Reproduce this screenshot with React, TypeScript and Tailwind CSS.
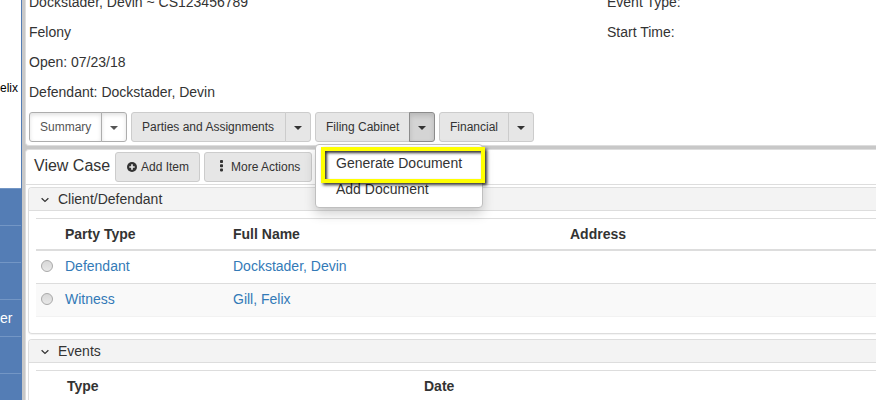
import React from "react";

const Caret = () => (
  <span className="mt-[2px] block h-0 w-0 border-x-4 border-t-4 border-x-transparent border-t-current" />
);

type SplitProps = {
  label: string;
  labelClass: string;
  variant?: "plain" | "selected" | "open";
};

function SplitButton({ label, labelClass, variant = "plain" }: SplitProps) {
  const selected = variant === "selected";
  const tone = selected
    ? "border-[#adadad] bg-white text-[#555] shadow-[inset_0_2px_4px_rgba(0,0,0,0.12)]"
    : "border-[#ccc] bg-[#e6e6e6] text-[#333]";
  const caretTone =
    variant === "open"
      ? "border-[#8c8c8c] bg-[#d4d4d4] text-[#333] shadow-[inset_0_3px_5px_rgba(0,0,0,0.125)]"
      : tone;
  return (
    <div className="flex h-[30px] shrink-0 text-[12px] leading-[18px]">
      <button className={`h-[30px] whitespace-nowrap rounded-l-[3px] border pl-[10px] text-left ${tone} ${labelClass}`}>
        {label}
      </button>
      <button className={`-ml-px flex h-[30px] w-[26px] items-center justify-center rounded-r-[3px] border ${caretTone}`}>
        <Caret />
      </button>
    </div>
  );
}

function PanelHeader({ title }: { title: string }) {
  return (
    <div className="flex h-[23px] items-center border-b border-[#ddd] bg-[#f3f3f3] pl-[11px] leading-5">
      <svg width="10" height="8" viewBox="0 0 10 8" className="mr-[8px] mt-[1px]" fill="none" stroke="#333" strokeWidth="1.2">
        <path d="M1.6 2.2 5 5.5l3.4-3.3" />
      </svg>
      <span>{title}</span>
    </div>
  );
}

const Radio = () => (
  <span className="ml-[5px] block h-3 w-3 rounded-full border border-[#a9a9a9] bg-linear-to-b from-[#d8d8d8] to-[#e8e8e8]" />
);

const parties = [
  { type: "Defendant", name: "Dockstader, Devin", row: "h-[33px] border-b border-[#ddd]" },
  { type: "Witness", name: "Gill, Felix", row: "h-[33px] bg-[#f9f9f9] border-b border-[#f2f2f2]" },
];

export default function App() {
  return (
    <div className="flex h-[400px] w-[876px] overflow-hidden bg-[#c8c8c8] font-['Liberation_Sans',Arial,sans-serif] text-[14px] leading-5 text-[#333]">
      <aside className="flex w-[22px] shrink-0 flex-col border-r border-[#547db5] bg-white">
        <div className="h-[188px] shrink-0 pt-[79px] text-[12px] leading-[18px] text-black">elix</div>
        <div className="min-h-0 flex-1 bg-[#547db5] text-white">
          <div className="h-[37px] border-t border-[#7396c5]" />
          <div className="h-[37px] border-t border-[#7396c5]" />
          <div className="h-[37px] border-t border-[#7396c5]" />
          <div className="h-[37px] border-t border-[#7396c5] pt-[8px]">er</div>
          <div className="h-[37px] border-t border-[#7396c5]" />
          <div className="h-[27px] border-t border-[#7396c5]" />
        </div>
      </aside>

      <main className="ml-[3px] flex min-w-0 flex-1 flex-col">
        <section className="h-[146px] shrink-0 rounded-bl-[4px] border-b border-l border-[#ddd] bg-white pl-[3px]">
          <div className="-mt-2 flex h-[120px]">
            <div className="flex w-[578px] flex-col gap-[10px]">
              <div>Dockstader, Devin ~ CS123456789</div>
              <div>Felony</div>
              <div>Open: 07/23/18</div>
              <div>Defendant: Dockstader, Devin</div>
            </div>
            <div className="flex flex-col gap-[10px]">
              <div>Event Type:</div>
              <div>Start Time:</div>
            </div>
          </div>
          <nav className="flex gap-1">
            <SplitButton label="Summary" labelClass="w-[73px]" variant="selected" />
            <SplitButton label="Parties and Assignments" labelClass="w-[155px]" />
            <div className="relative">
              <SplitButton label="Filing Cabinet" labelClass="w-[95px]" variant="open" />
              <div className="absolute left-0 top-[32px] z-10 h-[64px] w-[168px] rounded-[4px] border border-[#bfbfbf] bg-white pl-[20px] pt-[8px] shadow-[0_6px_12px_rgba(0,0,0,0.175)]">
                <div className="h-[26px]">Generate Document</div>
                <div className="h-[26px]">Add Document</div>
                <div className="absolute left-[5px] top-[2px] h-[36px] w-[164px] border-4 border-[#ffff00] shadow-[2px_2px_3px_rgba(0,0,0,0.8),inset_2px_2px_3px_rgba(0,0,0,0.8)]" />
              </div>
            </div>
            <SplitButton label="Financial" labelClass="w-[70px]" />
          </nav>
        </section>

        <section className="mt-[3px] min-h-0 flex-1 rounded-tl-[4px] border-l border-t border-[#ddd] bg-white">
          <div className="flex h-[35px] border-b border-[#ddd] pl-[8px] pt-[2px]">
            <h1 className="w-[81px] pt-[4px] text-[16px] leading-5">View Case</h1>
            <button className="mr-1 flex h-[30px] w-[85px] items-center rounded-[3px] border border-[#ccc] bg-[#e6e6e6] pl-[11px] text-[12px]">
              <svg width="10" height="10" viewBox="0 0 10 10" className="-mt-px mr-[4px]">
                <circle cx="5" cy="5" r="5" fill="#333" />
                <path d="M5 2.3v5.4M2.3 5h5.4" stroke="#e6e6e6" strokeWidth="1.7" />
              </svg>
              Add Item
            </button>
            <button className="flex h-[30px] w-[108px] items-center rounded-[3px] border border-[#ccc] bg-[#e6e6e6] pl-[15px] text-[12px]">
              <svg width="3" height="12" viewBox="0 0 3 12" className="-mt-[2px] mr-[8px]" fill="#333">
                <rect width="3" height="3" rx="0.8" y="0" />
                <rect width="3" height="3" rx="0.8" y="4.2" />
                <rect width="3" height="3" rx="0.8" y="8.4" />
              </svg>
              More Actions
            </button>
          </div>

          <div className="ml-[2px] mt-[2px] h-[147px] overflow-hidden rounded-l-[4px] border border-r-0 border-[#ddd] shadow-[0_1px_1px_rgba(0,0,0,0.05)]">
            <PanelHeader title="Client/Defendant" />
            <div className="ml-[7px] mt-[7px] border-t border-[#ddd]">
              <div className="grid h-[32px] grid-cols-[29px_168px_337px_1fr] items-center border-b-2 border-[#ddd] font-bold">
                <span />
                <span>Party Type</span>
                <span>Full Name</span>
                <span>Address</span>
              </div>
              {parties.map((p) => (
                <div key={p.type} className={`grid grid-cols-[29px_168px_337px_1fr] items-center pb-[2px] text-[#337ab7] ${p.row}`}>
                  <Radio />
                  <a>{p.type}</a>
                  <a>{p.name}</a>
                </div>
              ))}
            </div>
          </div>

          <div className="ml-[2px] mt-[5px] h-[80px] overflow-hidden rounded-l-[4px] border border-r-0 border-[#ddd]">
            <PanelHeader title="Events" />
            <div className="ml-[7px] mt-[7px] grid h-[32px] grid-cols-[31px_357px_1fr] items-center border-t border-[#ddd] pb-[2px] font-bold">
              <span />
              <span>Type</span>
              <span>Date</span>
            </div>
          </div>
        </section>
      </main>
    </div>
  );
}
